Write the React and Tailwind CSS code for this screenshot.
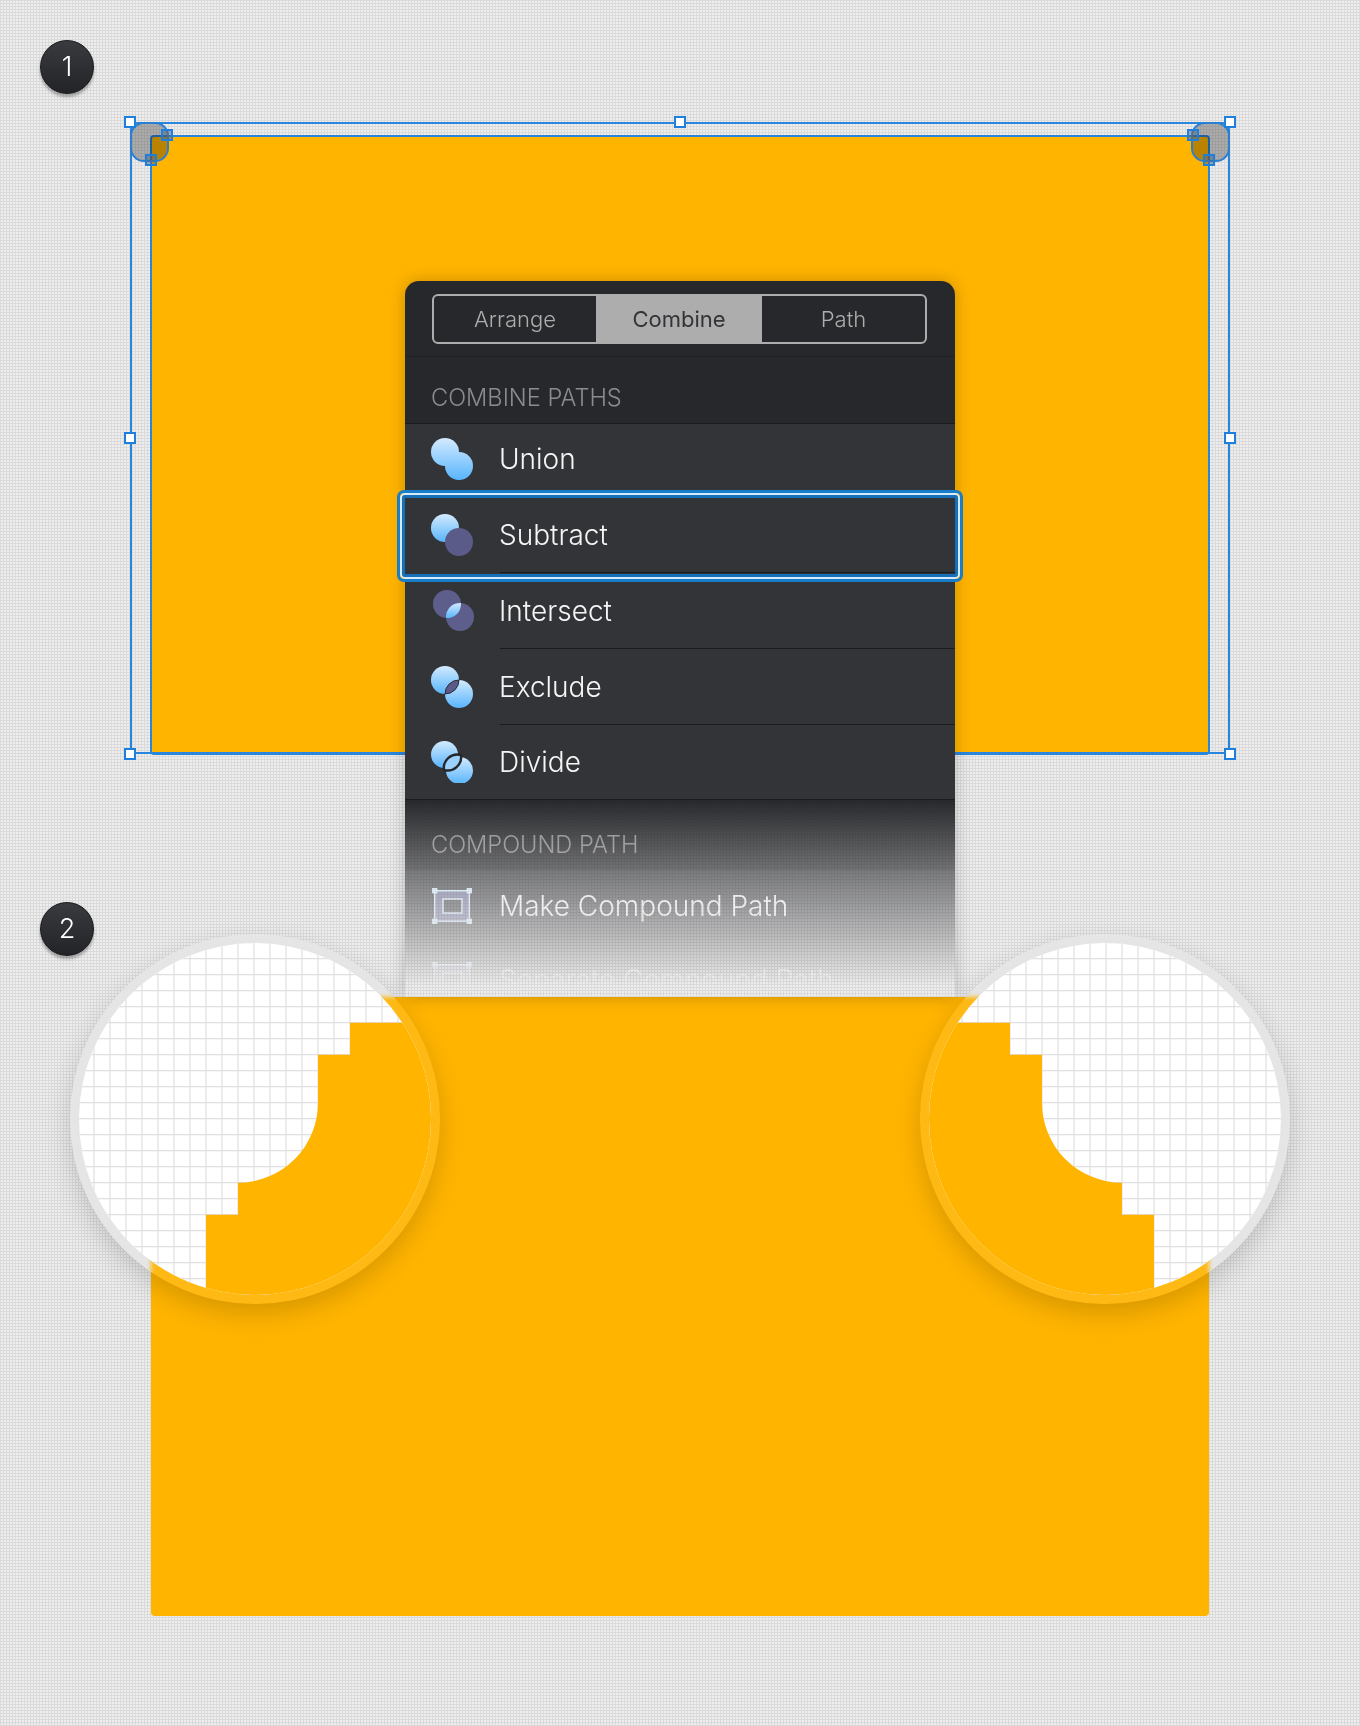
const grad = (id) => (
  <linearGradient id={id} x1="0" y1="0" x2="0" y2="1">
    <stop offset="0%" stopColor="#d3eafe" />
    <stop offset="100%" stopColor="#58b5fe" />
  </linearGradient>
);

const LENS = "M28 14A14 14 0 0 1 14 28A14 14 0 0 1 28 14Z";

const UnionIcon = () => (
  <svg width="42" height="42" viewBox="0 0 42 42">
    <defs>
      <linearGradient id="union" gradientUnits="userSpaceOnUse" x1="0" y1="0" x2="0" y2="42">
        <stop offset="0%" stopColor="#d3eafe" />
        <stop offset="100%" stopColor="#58b5fe" />
      </linearGradient>
    </defs>
    <circle cx="14" cy="14" r="14" fill="url(#union)" />
    <circle cx="28" cy="28" r="14" fill="url(#union)" />
  </svg>
);

const SubtractIcon = () => (
  <svg width="42" height="42" viewBox="0 0 42 42">
    <defs>{grad("subtract")}</defs>
    <circle cx="14" cy="14" r="14" fill="url(#subtract)" />
    <circle cx="28" cy="28" r="14" fill="#5b5b89" />
  </svg>
);

const IntersectIcon = () => (
  <svg width="44" height="42" viewBox="0 0 44 42" className="-mr-[2px]">
    <defs>{grad("intersect")}</defs>
    <circle cx="16" cy="14" r="14" fill="#5e5e8c" />
    <circle cx="29" cy="27" r="14" fill="#5e5e8c" />
    <path d="M30 13A14 14 0 0 1 15 28A14 14 0 0 1 30 13Z" fill="url(#intersect)" />
  </svg>
);

const ExcludeIcon = () => (
  <svg width="42" height="42" viewBox="0 0 42 42">
    <defs>{grad("exclude")}</defs>
    <circle cx="14" cy="14" r="14" fill="url(#exclude)" />
    <circle cx="28" cy="28" r="14" fill="url(#exclude)" />
    <path d={LENS} fill="#5b5b89" stroke="#2b2c30" strokeWidth="1" />
  </svg>
);

const DivideIcon = () => (
  <svg width="42" height="42" viewBox="0 0 42 42">
    <defs>{grad("divide")}</defs>
    <circle cx="13.5" cy="13.5" r="13.5" fill="url(#divide)" />
    <circle cx="28.5" cy="29.5" r="13.5" fill="url(#divide)" />
    <path d="M30 14A13.5 13.5 0 0 1 13 29A13.5 13.5 0 0 1 30 14Z" fill="#9ad1fe" stroke="#26272b" strokeWidth="2.4" />
  </svg>
);

const CompoundIcon = () => (
  <svg width="42" height="42" viewBox="0 0 42 42">
    <path d="M3.7 5.7H38.3V36.3H3.7ZM12 14V28H31V14Z" fill="#6a6a94" fillRule="evenodd" stroke="#d3ecfb" strokeWidth="1.5" />
    {[[3.7, 5.7], [38.3, 5.7], [3.7, 36.3], [38.3, 36.3]].map(([x, y]) => (
      <rect key={`${x}-${y}`} x={x - 2.7} y={y - 2.7} width="5.4" height="5.4" fill="#d3ecfb" />
    ))}
  </svg>
);

const Row = ({ Icon, label, height, divider }) => (
  <div className={`relative flex items-center bg-[#333438] pl-[26px] ${height}`}>
    <Icon />
    <span className="ml-[26px] text-[28px] leading-[36px] font-light text-[#f5f5f5]">{label}</span>
    {divider && <div className="absolute right-0 bottom-0 left-[95px] h-px bg-[#1b1c1e]" />}
  </div>
);

const SectionTitle = ({ children, height }) => (
  <div className={`flex items-end bg-[#27282b] pb-[11px] pl-[26px] ${height}`}>
    <span className="text-[23.6px] leading-[28px] font-light text-[#8b8c8f]">{children}</span>
  </div>
);

const Panel = () => (
  <div className="absolute top-[281px] left-1/2 z-10 w-[550px] -translate-x-1/2 rounded-t-[14px] shadow-[0_0_16px_rgba(0,0,0,0.22)]">
    <div className="h-[76px] rounded-t-[14px] border-b border-[#202124] bg-[#27282b] pt-[13px] pl-[27px]">
      <div className="grid h-[50px] w-[495px] grid-cols-[162px_166px_1fr] overflow-hidden rounded-[6px] border-2 border-[#adadad] text-[22px] font-light text-[#adadad]">
        <div className="flex items-center justify-center">Arrange</div>
        <div className="flex items-center justify-center bg-[#adadad] font-normal text-[#333437]">Combine</div>
        <div className="flex items-center justify-center">Path</div>
      </div>
    </div>
    <SectionTitle height="h-[66px]">COMBINE PATHS</SectionTitle>
    <div className="border-y border-[#1b1c1e]">
      <Row Icon={UnionIcon} label="Union" height="h-[73px] pb-[3px]" />
      <div className="relative z-10">
        <Row Icon={SubtractIcon} label="Subtract" height="h-[76px]" divider />
        <div className="absolute -top-[7px] -right-[8px] -bottom-[9px] -left-[8px] rounded-[7px] border-[3px] border-[#1b7cc8]">
          <div className="h-full rounded-[5px] border-2 border-[#d4eaff]">
            <div className="h-full rounded-[3px] border-[3px] border-[#1570b8]" />
          </div>
        </div>
      </div>
      <Row Icon={IntersectIcon} label="Intersect" height="h-[76px]" divider />
      <Row Icon={ExcludeIcon} label="Exclude" height="h-[76px] pb-px" divider />
      <Row Icon={DivideIcon} label="Divide" height="h-[74px]" />
    </div>
    <div className="h-[197px] overflow-hidden [mask-image:linear-gradient(to_bottom,black,transparent_94%)]">
      <SectionTitle height="h-[70px]">COMPOUND PATH</SectionTitle>
      <Row Icon={CompoundIcon} label="Make Compound Path" height="h-[72px]" />
      <Row Icon={CompoundIcon} label="Separate Compound Path" height="h-[76px]" />
    </div>
  </div>
);

const Handle = ({ className }) => (
  <div className={`absolute h-[12px] w-[12px] border-2 border-[#1e80dc] bg-white ${className}`} />
);

const Knob = ({ className }) => (
  <div className={`absolute h-[12px] w-[12px] border-2 border-[#1e80dc] bg-[#56647a]/50 ${className}`} />
);

const CornerShape = ({ children }) => (
  <div className="relative h-[40px] w-[39px] rounded-[14px] border-2 border-[#2a7fd0]">
    <div className="absolute inset-0 rounded-[12px] bg-[#b9b9b9] mix-blend-multiply" />
    {children}
  </div>
);

// bounding box of the selected shape, hangs off the orange rectangle
const Selection = () => (
  <div className="absolute -top-[15px] -right-[22px] -bottom-[1px] -left-[22px] flex items-start justify-between outline-2 -outline-offset-2 outline-[#2a86dc]">
    <CornerShape>
      <Knob className="top-[5px] right-0 translate-x-1/2" />
      <Knob className="bottom-0 left-[13px] translate-y-1/2" />
    </CornerShape>
    <CornerShape>
      <Knob className="top-[5px] left-0 -translate-x-1/2" />
      <Knob className="right-[13px] bottom-0 translate-y-1/2" />
    </CornerShape>
    <Handle className="top-0 left-0 -translate-x-1/2 -translate-y-1/2" />
    <Handle className="top-0 left-1/2 -translate-x-1/2 -translate-y-1/2" />
    <Handle className="top-0 right-0 translate-x-1/2 -translate-y-1/2" />
    <Handle className="top-1/2 left-0 -translate-x-1/2 -translate-y-1/2" />
    <Handle className="top-1/2 right-0 translate-x-1/2 -translate-y-1/2" />
    <Handle className="bottom-0 left-0 -translate-x-1/2 translate-y-1/2" />
    <Handle className="right-0 bottom-0 translate-x-1/2 translate-y-1/2" />
  </div>
);

const Badge = ({ n, className }) => (
  <div className={`absolute flex h-[54px] w-[54px] items-center justify-center rounded-full border border-[#17181a] bg-gradient-to-b from-[#3a3b3e] to-[#232427] pt-px text-[27px] font-light text-white shadow-[0_3px_3px_rgba(0,0,0,0.3)] ${className}`}>
    {n}
  </div>
);

const GRID = Array.from({ length: 22 }, (_, i) => 15 + i * 16);

// the zoomed corner, drawn for the left side and flipped for the right
const Magnifier = ({ flip }) => (
  <div className="h-[370px] w-[370px] rounded-full bg-white/[0.08] p-[9px] shadow-[0_10px_26px_rgba(0,0,0,0.16)] backdrop-blur-[2px]">
    <div className="h-[352px] w-[352px] overflow-hidden rounded-full">
      <svg width="352" height="352" viewBox="0 0 352 352" className={flip ? "-scale-x-100" : ""}>
        <rect width="352" height="352" fill="#ffffff" />
        {GRID.map((p) => (
          <g key={p} stroke="#e0e0e4" strokeWidth="1.2">
            <line x1={p} y1="0" x2={p} y2="352" />
            <line x1="0" y1={p + 0.7} x2="352" y2={p + 0.7} />
          </g>
        ))}
        <path d="M352 79.7H271V111.7H239V159.7A80 80 0 0 1 159 239.7V271.7H127V352H352Z" fill="#ffb400" />
      </svg>
    </div>
  </div>
);

export default function App() {
  return (
    <div className="relative flex h-[1726px] w-[1360px] flex-col items-center overflow-hidden bg-[#eeeeee] bg-[image:linear-gradient(#dadada_1px,transparent_1px),linear-gradient(90deg,#dadada_1px,transparent_1px)] bg-[size:3px_3px] pt-[135px] font-['Inter',sans-serif]">
      <div className="relative h-[620px] w-[1060px] rounded-[4px] border-2 border-[#2a86dc] bg-[#ffb400]">
        <Selection />
      </div>
      <div className="mt-[242px] h-[619px] w-[1058px] rounded-b-[4px] bg-[#ffb400]" />
      <Panel />
      <Badge n="1" className="top-[40px] left-[40px]" />
      <Badge n="2" className="top-[902px] left-[40px]" />
      <div className="absolute inset-x-0 top-[934px] z-20 flex justify-between px-[70px]">
        <Magnifier />
        <Magnifier flip />
      </div>
    </div>
  );
}
